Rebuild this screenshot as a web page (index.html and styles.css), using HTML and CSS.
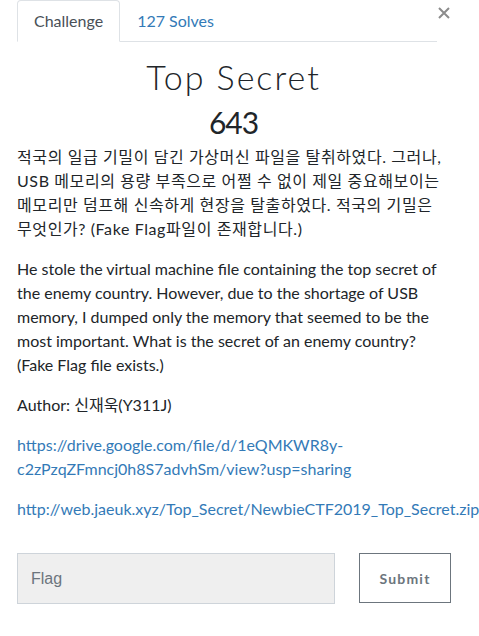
FILE: index.html
```html
<!DOCTYPE html>
<html lang="ko">
<head>
<meta charset="utf-8">
<title>Top Secret</title>
<link rel="stylesheet" href="styles.css">
</head>
<body>
<div class="modal">
  <div class="tabs">
    <div class="tab active">Challenge</div>
    <div class="tab"><a href="#">127 Solves</a></div>
  </div>
  <button class="close" aria-label="Close">
    <svg width="12" height="12" viewBox="0 0 12 12"><path d="M1 1L11 11M11 1L1 11" stroke="#8c8c8c" stroke-width="2" stroke-linecap="butt"/></svg>
  </button>
  <h2 class="name">Top Secret</h2>
  <h3 class="value">643</h3>
  <div class="desc">
    <p class="ko">적국의 일급 기밀이 담긴 가상머신 파일을 탈취하였다. 그러나, USB 메모리의 용량 부족으로 어쩔 수 없이 제일 중요해보이는 메모리만 덤프해 신속하게 현장을 탈출하였다. 적국의 기밀은 무엇인가? (Fake Flag파일이 존재합니다.)</p>
    <p>He stole the virtual machine file containing the top secret of the enemy country. However, due to the shortage of USB memory, I dumped only the memory that seemed to be the most important. What is the secret of an enemy country? (Fake Flag file exists.)</p>
    <p>Author: 신재욱(Y311J)</p>
    <p><a href="#">https://drive.google.com/file/d/1eQMKWR8y-c2zPzqZFmncj0h8S7advhSm/view?usp=sharing</a></p>
    <p><a href="#" class="nowrap">http://web.jaeuk.xyz/Top_Secret/NewbieCTF2019_Top_Secret.zip</a></p>
  </div>
  <form class="submit-row">
    <input class="flag" type="text" placeholder="Flag">
    <button class="submit" type="button">Submit</button>
  </form>
</div>
</body>
</html>
```

FILE: styles.css
```css
html, body {
  margin: 0;
  padding: 0;
  background: #fff;
}
body {
  font-family: Lato, "Noto Sans CJK KR", sans-serif;
  font-size: 16px;
  line-height: 24px;
  color: #212529;
}
.modal {
  position: relative;
  width: 433px;
  padding: 0 0 0 17px;
}
.tabs {
  display: flex;
  width: 420px;
  border-bottom: 1px solid #dee2e6;
  margin-top: 0;
}
.tab {
  padding: 8px 16px 8px 16px;
  border: 1px solid transparent;
  border-top-left-radius: 4px;
  border-top-right-radius: 4px;
  margin-bottom: -1px;
}
.tab.active {
  color: #495057;
  border-color: #dee2e6 #dee2e6 #fff;
  background: #fff;
}
a {
  color: #337ab7;
  text-decoration: none;
}
.close {
  position: absolute;
  top: 7px;
  left: 438px;
  padding: 0;
  border: 0;
  background: none;
  width: 12px;
  height: 12px;
}
.close svg { display: block; }
.name {
  font-family: Lato, sans-serif;
  font-weight: 300;
  font-size: 34px;
  line-height: 40px;
  text-align: center;
  margin: 15px 0 0;
  color: #212529;
  letter-spacing: 2px;
}
.value {
  font-family: Lato, sans-serif;
  font-weight: 400;
  font-size: 30px;
  line-height: 36px;
  letter-spacing: -1px;
  text-align: center;
  margin: 7px 0 5px;
}
.desc p {
  margin: 0 0 16px;
}
.desc p.ko {
  letter-spacing: 0.6px;
  word-break: keep-all;
}
.nowrap { white-space: nowrap; }
.submit-row {
  display: flex;
  gap: 24px;
  margin-top: 32px;
}
.flag {
  flex: none;
  box-sizing: border-box;
  width: 318px;
  height: 51px;
  border: 1px solid #ced4da;
  background: #efefef;
  padding: 0 13px;
  font-family: "Liberation Sans", Arial, sans-serif;
  font-size: 16px;
  color: #495057;
  outline: none;
}
.flag::placeholder { color: #6c757d; }
.submit {
  flex: none;
  box-sizing: border-box;
  width: 92px;
  height: 50px;
  border: 1px solid #6c757d;
  background: #fff;
  color: #6c757d;
  font-family: Lato, sans-serif;
  font-weight: 700;
  font-size: 14px;
  letter-spacing: 1.2px;
  padding: 0;
}
```
